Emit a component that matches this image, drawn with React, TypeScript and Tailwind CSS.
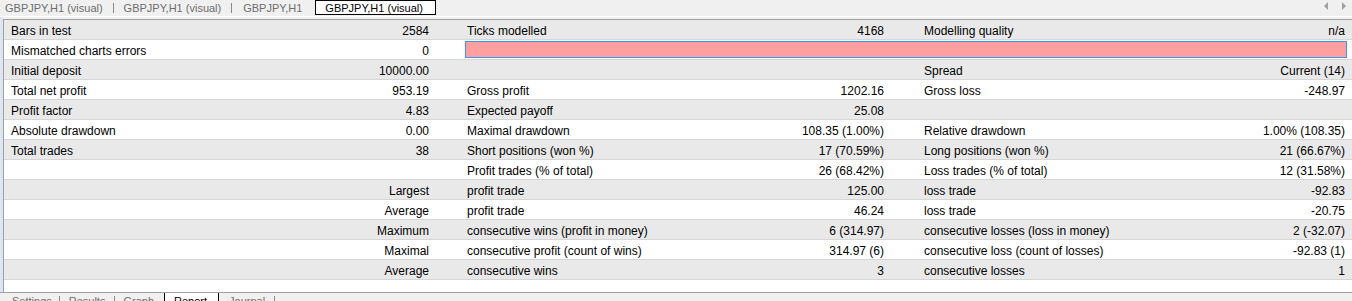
import React from 'react';

type Row = [string, string, string, string, string, string];

const rows: Row[] = [
  ['Bars in test', '2584', 'Ticks modelled', '4168', 'Modelling quality', 'n/a'],
  ['Mismatched charts errors', '0', '', '', '', ''],
  ['Initial deposit', '10000.00', '', '', 'Spread', 'Current (14)'],
  ['Total net profit', '953.19', 'Gross profit', '1202.16', 'Gross loss', '-248.97'],
  ['Profit factor', '4.83', 'Expected payoff', '25.08', '', ''],
  ['Absolute drawdown', '0.00', 'Maximal drawdown', '108.35 (1.00%)', 'Relative drawdown', '1.00% (108.35)'],
  ['Total trades', '38', 'Short positions (won %)', '17 (70.59%)', 'Long positions (won %)', '21 (66.67%)'],
  ['', '', 'Profit trades (% of total)', '26 (68.42%)', 'Loss trades (% of total)', '12 (31.58%)'],
  ['', 'Largest', 'profit trade', '125.00', 'loss trade', '-92.83'],
  ['', 'Average', 'profit trade', '46.24', 'loss trade', '-20.75'],
  ['', 'Maximum', 'consecutive wins (profit in money)', '6 (314.97)', 'consecutive losses (loss in money)', '2 (-32.07)'],
  ['', 'Maximal', 'consecutive profit (count of wins)', '314.97 (6)', 'consecutive loss (count of losses)', '-92.83 (1)'],
  ['', 'Average', 'consecutive wins', '3', 'consecutive losses', '1'],
];

const cols = 'grid grid-cols-[226px_203px_30px_217px_208px_32px_220px_209px]';

const TopTabs: React.FC = () => (
  <div className="h-[16px] flex items-start text-[11px] leading-[14px]">
    <span className="pl-[5px] text-[#6d6d6d] pt-[1px]">GBPJPY,H1 (visual)</span>
    <span className="ml-[10px] mt-[3px] w-px h-[10px] bg-[#8a8a8a]" />
    <span className="ml-[10px] text-[#6d6d6d] pt-[1px]">GBPJPY,H1 (visual)</span>
    <span className="ml-[10px] mt-[3px] w-px h-[10px] bg-[#8a8a8a]" />
    <span className="ml-[11px] text-[#6d6d6d] pt-[1px]">GBPJPY,H1</span>
    <span className="ml-[13px] h-[15px] w-[121px] border border-black bg-white pl-[9px] text-black">
      GBPJPY,H1 (visual)
    </span>
    <div className="ml-auto mr-[6px] mt-[2px] flex gap-[12px]">
      <svg width="5" height="8" viewBox="0 0 5 8">
        <path d="M4 0 L0 4 L4 8 Z" fill="#a0a0a0" />
      </svg>
      <svg width="5" height="8" viewBox="0 0 5 8">
        <path d="M1 0 L5 4 L1 8 Z" fill="#a0a0a0" />
      </svg>
    </div>
  </div>
);

const BottomTabs: React.FC = () => (
  <div className="flex items-start h-[9px] overflow-hidden text-[11px] leading-[12px] text-[#6d6d6d] border-t border-[#a0a0a0]">
    <span className="pl-[12px] pt-[2px]">Settings</span>
    <span className="ml-[7px] mt-[3px] w-px h-[10px] bg-[#8a8a8a]" />
    <span className="ml-[9px] pt-[2px]">Results</span>
    <span className="ml-[9px] mt-[3px] w-px h-[10px] bg-[#8a8a8a]" />
    <span className="ml-[8px] pt-[2px]">Graph</span>
    <span className="ml-[10px] -mt-px h-[12px] w-[55px] border-x border-black bg-white pl-[9px] text-black pt-[3px]">
      Report
    </span>
    <div className="flex-1 -mt-px h-[12px] border-t border-black flex items-start">
      <span className="ml-[10px] pt-[2px]">Journal</span>
      <span className="ml-[9px] mt-[3px] w-px h-[10px] bg-[#8a8a8a]" />
    </div>
  </div>
);

const App: React.FC = () => {
  return (
    <div
      className="w-[1352px] h-[301px] overflow-hidden bg-[#f0f0f0] text-black"
      style={{ fontFamily: '"Liberation Sans", Arial, sans-serif' }}
    >
      <TopTabs />
      <div className="h-px bg-white" />
      <div className="flex h-[275px]">
        <div className="w-[3px] bg-[#dce6f0]" />
        <div className="flex-1 flex flex-col border-l border-t border-[#a0a0a0] mt-[2px] bg-white">
          <div className="text-[12px] leading-[22px]">
            {rows.map((r, i) => (
              <div
                key={i}
                className={`${cols} h-[20px] overflow-hidden border-b border-[#d6d6d6] ${i % 2 === 0 ? 'bg-[#e9e9e9]' : 'bg-white'}`}
              >
                <div className="pl-[7px] whitespace-nowrap">{r[0]}</div>
                <div className="pr-[4px] text-right whitespace-nowrap">{r[1]}</div>
                <div />
                {i === 1 ? (
                  <div className="col-span-5 ml-[2px] mr-[2px] mt-px h-[17px] bg-[#ffa0a0] border border-[#3399ff]" />
                ) : (
                  <>
                    <div className="pl-[4px] whitespace-nowrap">{r[2]}</div>
                    <div className="pr-[4px] text-right whitespace-nowrap">{r[3]}</div>
                    <div />
                    <div className="pl-[4px] whitespace-nowrap">{r[4]}</div>
                    <div className="pr-[4px] text-right whitespace-nowrap">{r[5]}</div>
                  </>
                )}
              </div>
            ))}
          </div>
          <div className="flex-1" />
        </div>
      </div>
      <BottomTabs />
    </div>
  );
};

export default App;
